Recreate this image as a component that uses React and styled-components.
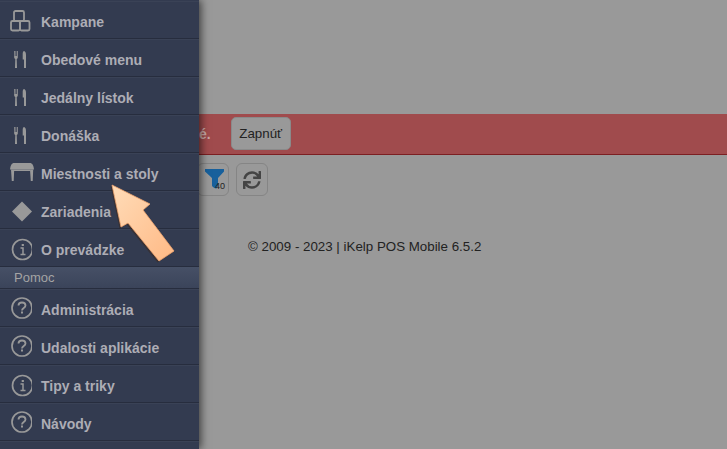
import styled, { createGlobalStyle } from 'styled-components'
import { FaSync } from 'react-icons/fa'

const GlobalStyle = createGlobalStyle`
  html, body {
    margin: 0;
    padding: 0;
    overflow: hidden;
    background: #999999;
    font-family: "Liberation Sans", Arial, sans-serif;
  }
`

const CubesIcon = () => (
  <svg width="32" height="32" viewBox="0 0 32 32" fill="none" stroke="#999" strokeWidth="1.800">
    <rect x="14" y="7" width="10" height="10" rx="1.500" />
    <rect x="11" y="17" width="9" height="9.500" rx="1.500" />
    <rect x="20" y="17" width="9.500" height="9.500" rx="1.500" />
  </svg>
)

const CutleryIcon = () => (
  <svg width="32" height="32" viewBox="0 0 32 32" fill="#999">
    <path d="M14 9h.8v5h.7V9h.8v5h.7V9h.8v6.500c0 .8-.7 1.200-1.100 1.500l.3 9h-2l.3-9c-.4-.3-1.100-.7-1.100-1.500z" />
    <path d="M24 9c1.300.4 2 1.800 2 4v13h-2v-8.500h-1.300V12c0-1.800.5-2.800 1.300-3z" />
  </svg>
)

const TableIcon = () => (
  <svg width="36" height="32" viewBox="0 0 36 32" fill="#999">
    <path d="M14 7h16c2 0 3.500 2 4 6.500H10c.5-4.500 2-6.500 4-6.500z" />
    <path d="M11 13.500h3.200l-.5 11.500h-1.900zM30 13.500h3.200L32.700 25h-1.900zM14 13.500h16v1.500H14z" />
  </svg>
)

const DiamondIcon = () => (
  <svg width="32" height="32" viewBox="0 0 32 32" fill="#999">
    <path d="M22 7.500l10 10-10 10-10-10z" />
  </svg>
)

const InfoIcon = () => (
  <svg width="32" height="32" viewBox="0 0 32 32" fill="none" stroke="#999">
    <circle cx="22.500" cy="17.500" r="10" strokeWidth="1.700" />
    <path d="M20.500 16h2.500v6.500M20.500 22.500h5" strokeWidth="1.500" />
    <path d="M22.800 12v2" strokeWidth="2.200" />
  </svg>
)

const HelpIcon = () => (
  <svg width="32" height="32" viewBox="0 0 32 32" fill="none" stroke="#999">
    <circle cx="22" cy="16" r="10" strokeWidth="1.700" />
    <path d="M18.500 13.500c0-2 1.500-3 3.500-3s3.500 1.200 3.500 3c0 2.500-3.500 2.500-3.500 5" strokeWidth="1.800" />
    <path d="M22 19.500v2" strokeWidth="2" />
  </svg>
)

const FunnelIcon = () => (
  <svg width="20" height="20" viewBox="0 0 20 20" fill="#17609c">
    <path d="M0 0h19v2.500l-6 6.500v8l-1.500 2.500C10 19.500 7 18 7 16.500V9L0 2.500z" />
  </svg>
)

const ArrowPointer = () => (
  <ArrowSvg width="90" height="90" viewBox="0 0 90 90">
    <defs>
      <linearGradient id="peach" x1="0" y1="0" x2="1" y2="1">
        <stop offset="0" stopColor="#ffdcb8" />
        <stop offset="1" stopColor="#ffb985" />
      </linearGradient>
    </defs>
    <path d="M12 5L50 24 43 30 74 71 59 81 28 43 21 47z" fill="#3a2a20" opacity="0.55" transform="translate(-1.500 1.500)" />
    <path d="M12 5L50 24 43 30 74 71 59 81 28 43 21 47z" fill="url(#peach)" stroke="#f0a56e" strokeWidth="0.800" />
  </ArrowSvg>
)

const topItems = [
  { label: 'Kampane', icon: <CubesIcon /> },
  { label: 'Obedové menu', icon: <CutleryIcon /> },
  { label: 'Jedálny lístok', icon: <CutleryIcon /> },
  { label: 'Donáška', icon: <CutleryIcon /> },
  { label: 'Miestnosti a stoly', icon: <TableIcon /> },
  { label: 'Zariadenia', icon: <DiamondIcon /> },
  { label: 'O prevádzke', icon: <InfoIcon /> },
]

const helpItems = [
  { label: 'Administrácia', icon: <HelpIcon /> },
  { label: 'Udalosti aplikácie', icon: <HelpIcon /> },
  { label: 'Tipy a triky', icon: <InfoIcon /> },
  { label: 'Návody', icon: <HelpIcon /> },
  { label: '', icon: <HelpIcon /> },
]

function MenuRow({ item }) {
  return (
    <Row>
      <IconSlot>{item.icon}</IconSlot>
      <RowLabel>{item.label}</RowLabel>
    </Row>
  )
}

function App() {
  return (
    <Page>
      <GlobalStyle />
      <Sidebar>
        {topItems.map((item) => (
          <MenuRow key={item.label} item={item} />
        ))}
        <Divider>Pomoc</Divider>
        {helpItems.map((item) => (
          <MenuRow key={item.label} item={item} />
        ))}
      </Sidebar>
      <Main>
        <Banner>
          <BannerText>é.</BannerText>
          <BannerButton>Zapnúť</BannerButton>
        </Banner>
        <Toolbar>
          <ToolButton $overlap>
            <FunnelIcon />
            <Badge>40</Badge>
          </ToolButton>
          <ToolButton>
            <FaSync size={18} color="#444" />
          </ToolButton>
        </Toolbar>
        <Footer>© 2009 - 2023 | iKelp POS Mobile 6.5.2</Footer>
      </Main>
      <ArrowPointer />
    </Page>
  )
}

const Page = styled.div`
  position: relative;
  display: flex;
  width: 727px;
  height: 449px;
  overflow: hidden;
  background: #999999;
`

const Sidebar = styled.nav`
  position: relative;
  z-index: 2;
  flex: 0 0 199px;
  height: 449px;
  padding-top: 1px;
  box-sizing: border-box;
  overflow: hidden;
  background: #333b50;
  box-shadow: 2px 0 8px rgba(0, 0, 0, 0.6);
`

const Row = styled.div`
  display: flex;
  align-items: center;
  height: 38px;
  box-sizing: border-box;
  border-top: 1px solid #3a4256;
  border-bottom: 1px solid #272d3e;
`

const IconSlot = styled.span`
  flex: 0 0 41px;
  display: flex;
  align-items: center;
  justify-content: flex-start;
  height: 32px;
  & svg {
    display: block;
    flex-shrink: 0;
  }
`

const RowLabel = styled.span`
  padding-top: 4px;
  font-size: 14px;
  font-weight: bold;
  color: #adadb5;
  white-space: nowrap;
`

const Divider = styled.div`
  height: 22px;
  box-sizing: border-box;
  padding-left: 14px;
  line-height: 21px;
  font-size: 13px;
  color: #a4a4a4;
  background: linear-gradient(#465066, #3b445a);
  border-bottom: 1px solid #272d3e;
`

const Main = styled.main`
  flex: 1;
  min-width: 0;
  display: flex;
  flex-direction: column;
  padding-top: 114px;
  color: #222;
`

const Banner = styled.div`
  display: flex;
  align-items: center;
  gap: 20px;
  height: 41px;
  box-sizing: border-box;
  background: #a04b4d;
  border-bottom: 1px solid #7c1f22;
  padding-bottom: 1px;
`

const BannerText = styled.span`
  font-size: 14px;
  font-weight: bold;
  color: #c9a8a8;
`

const BannerButton = styled.button`
  width: 60px;
  height: 33px;
  padding: 0;
  border: 1px solid #8a8a8a;
  border-radius: 5px;
  background: #999999;
  font-family: inherit;
  font-size: 13.330px;
  color: #222;
`

const Toolbar = styled.div`
  display: flex;
  gap: 7px;
  margin-top: 8px;
  margin-left: -2px;
`

const ToolButton = styled.div`
  position: relative;
  display: flex;
  align-items: center;
  justify-content: center;
  width: 32px;
  height: 33px;
  box-sizing: border-box;
  border: 1px solid #858585;
  border-radius: 6px;
  padding-left: ${(props) => (props.$overlap ? '3px' : '0')};
  padding-bottom: ${(props) => (props.$overlap ? '2px' : '0')};
`

const Badge = styled.span`
  position: absolute;
  right: 3px;
  bottom: 4px;
  font-size: 9px;
  color: #222;
`

const Footer = styled.div`
  margin-top: 42px;
  padding-left: 49px;
  font-size: 13.330px;
  line-height: 18px;
  white-space: nowrap;
`

const ArrowSvg = styled.svg`
  position: absolute;
  z-index: 3;
  left: 100px;
  top: 180px;
`

export default App
